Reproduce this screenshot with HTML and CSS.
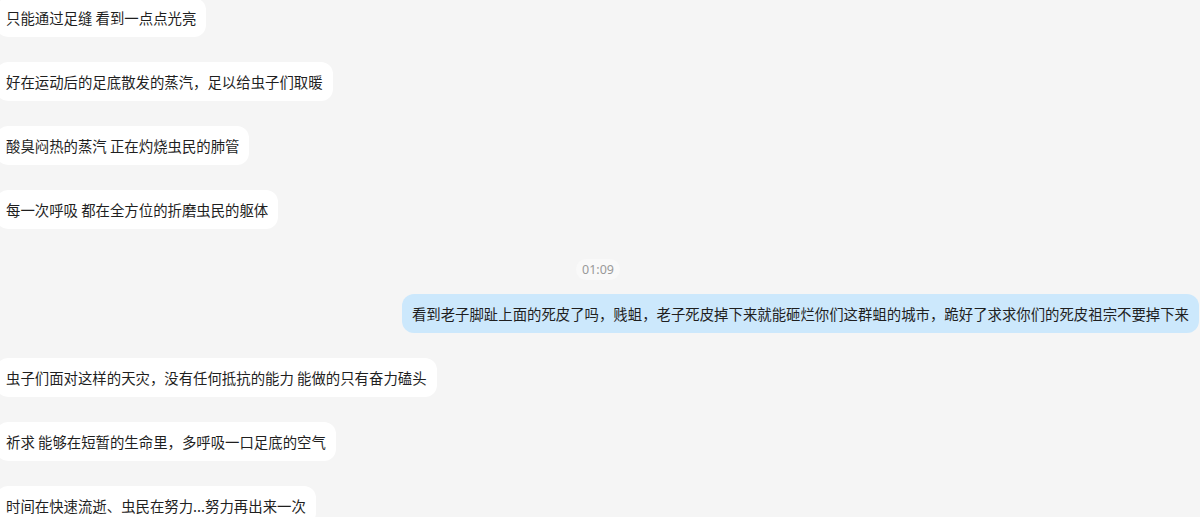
FILE: index.html
```html
<!DOCTYPE html>
<html lang="zh-CN">
<head>
    <meta charset="UTF-8">
    <meta name="viewport" content="width=device-width, initial-scale=1.0">
    <title>聊天记录</title>
    <link rel="stylesheet" href="styles.css">
</head>
<body>
    <div class="chat">
        <div class="row left"><div class="bubble">只能通过足缝 看到一点点光亮</div></div>
        <div class="row left"><div class="bubble">好在运动后的足底散发的蒸汽，足以给虫子们取暖</div></div>
        <div class="row left"><div class="bubble">酸臭闷热的蒸汽 正在灼烧虫民的肺管</div></div>
        <div class="row left"><div class="bubble">每一次呼吸 都在全方位的折磨虫民的躯体</div></div>
        <div class="time"><span>01:09</span></div>
        <div class="row right"><div class="bubble">看到老子脚趾上面的死皮了吗，贱蛆，老子死皮掉下来就能砸烂你们这群蛆的城市，跪好了求求你们的死皮祖宗不要掉下来</div></div>
        <div class="row left"><div class="bubble">虫子们面对这样的天灾，没有任何抵抗的能力 能做的只有奋力磕头</div></div>
        <div class="row left"><div class="bubble">祈求 能够在短暂的生命里，多呼吸一口足底的空气</div></div>
        <div class="row left"><div class="bubble">时间在快速流逝、虫民在努力...努力再出来一次</div></div>
    </div>
</body>
</html>
```

FILE: styles.css
```css
html, body {
    margin: 0;
    padding: 0;
    background-color: #f5f5f5;
    overflow: hidden;
}
body {
    font-family: "Noto Sans CJK SC", "Noto Sans", sans-serif;
    color: #1f1f1f;
    height: 517px;
}
.chat {
    display: flex;
    flex-direction: column;
    margin-top: -2px;
}
.row {
    display: flex;
    margin-bottom: 25px;
}
.row.left {
    justify-content: flex-start;
}
.row.right {
    justify-content: flex-end;
}
.bubble {
    background-color: #ffffff;
    border-radius: 12px;
    padding: 10px 10px;
    font-size: 14.4px;
    line-height: 19px;
    white-space: nowrap;
}
.left .bubble {
    margin-left: -4px;
}
.right .bubble {
    background-color: #cce8fc;
    margin-right: 1px;
}
.time {
    display: flex;
    justify-content: center;
    margin-top: 5px;
    margin-bottom: 14px;
}
.time span {
    background-color: #f9f9f9;
    color: #9a9a9a;
    font-size: 12.5px;
    line-height: 21px;
    padding: 0 6px;
    border-radius: 10px;
    font-family: "Noto Sans", "Liberation Sans", sans-serif;
    margin-left: -4px;
}
```
